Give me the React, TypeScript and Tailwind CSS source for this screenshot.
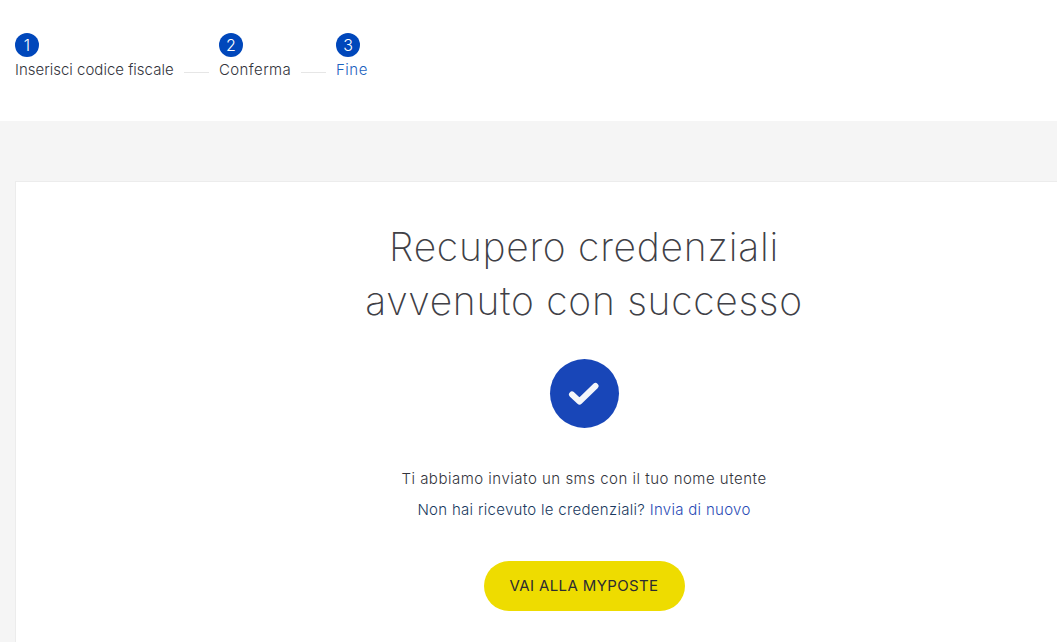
import React from "react";

function Step({ n, label, width, tracking, active }: { n: number; label: string; width: string; tracking: string; active?: boolean }) {
  return (
    <div className={`flex flex-col items-start ${width}`}>
      <div className="flex h-[24px] w-[24px] items-center justify-center rounded-full bg-[#0047bb] text-[16px] font-light leading-none text-white">
        {n}
      </div>
      <div className={`mt-[3px] whitespace-nowrap text-[15px] leading-[20px] font-light ${tracking} ${active ? "text-[#1b62c0]" : "text-[#33343c]"}`}>{label}</div>
    </div>
  );
}

function Line() {
  return <div className="mx-[10px] mt-[39px] h-px w-[25px] bg-[#e6e6e6]" />;
}

export default function App() {
  return (
    <div className="h-[642px] w-[1057px] overflow-hidden bg-[#f5f5f5] font-['Inter',sans-serif]">
      <header className="flex h-[121px] items-start bg-white pl-[15px] pt-[33px]">
        <Step n={1} label="Inserisci codice fiscale" width="w-[159px]" tracking="tracking-[0px]" />
        <Line />
        <Step n={2} label="Conferma" width="w-[72px]" tracking="tracking-[0.4px]" />
        <Line />
        <Step n={3} label="Fine" width="w-[32px]" tracking="tracking-[0.5px]" active />
      </header>
      <main className="pl-[15px] pt-[60px]">
        <section className="flex h-[480px] w-[1138px] flex-col items-center border border-[#ececec] bg-white pt-[38px]">
          <h1 className="text-center text-[39px] font-extralight leading-[54px] tracking-[0.72px] text-[#404046]">
            Recupero credenziali
            <br />
            avvenuto con successo
          </h1>
          <div className="mt-[31px] flex h-[69px] w-[69px] items-center justify-center rounded-full bg-[#1846b8]">
            <svg width="32" height="26" viewBox="0 0 32 26" fill="none">
              <path d="M4 13.5l7.5 7L27.5 5" stroke="#f4f6fb" strokeWidth="6" strokeLinecap="round" strokeLinejoin="round" />
            </svg>
          </div>
          <p className="mt-[41px] text-[15px] font-light leading-[20px] tracking-[0.5px] text-[#33343c]">Ti abbiamo inviato un sms con il tuo nome utente</p>
          <p className="mt-[11px] text-[15px] font-light leading-[20px] tracking-[0.3px] text-[#1a3a60]">
            Non hai ricevuto le credenziali? <a className="text-[#2a4bb5]">Invia di nuovo</a>
          </p>
          <button className="mt-[41px] h-[50px] w-[201px] rounded-full bg-[#eedc00] text-[15px] font-normal tracking-[0.37px] text-[#2c2c32]">VAI ALLA MYPOSTE</button>
        </section>
      </main>
    </div>
  );
}
